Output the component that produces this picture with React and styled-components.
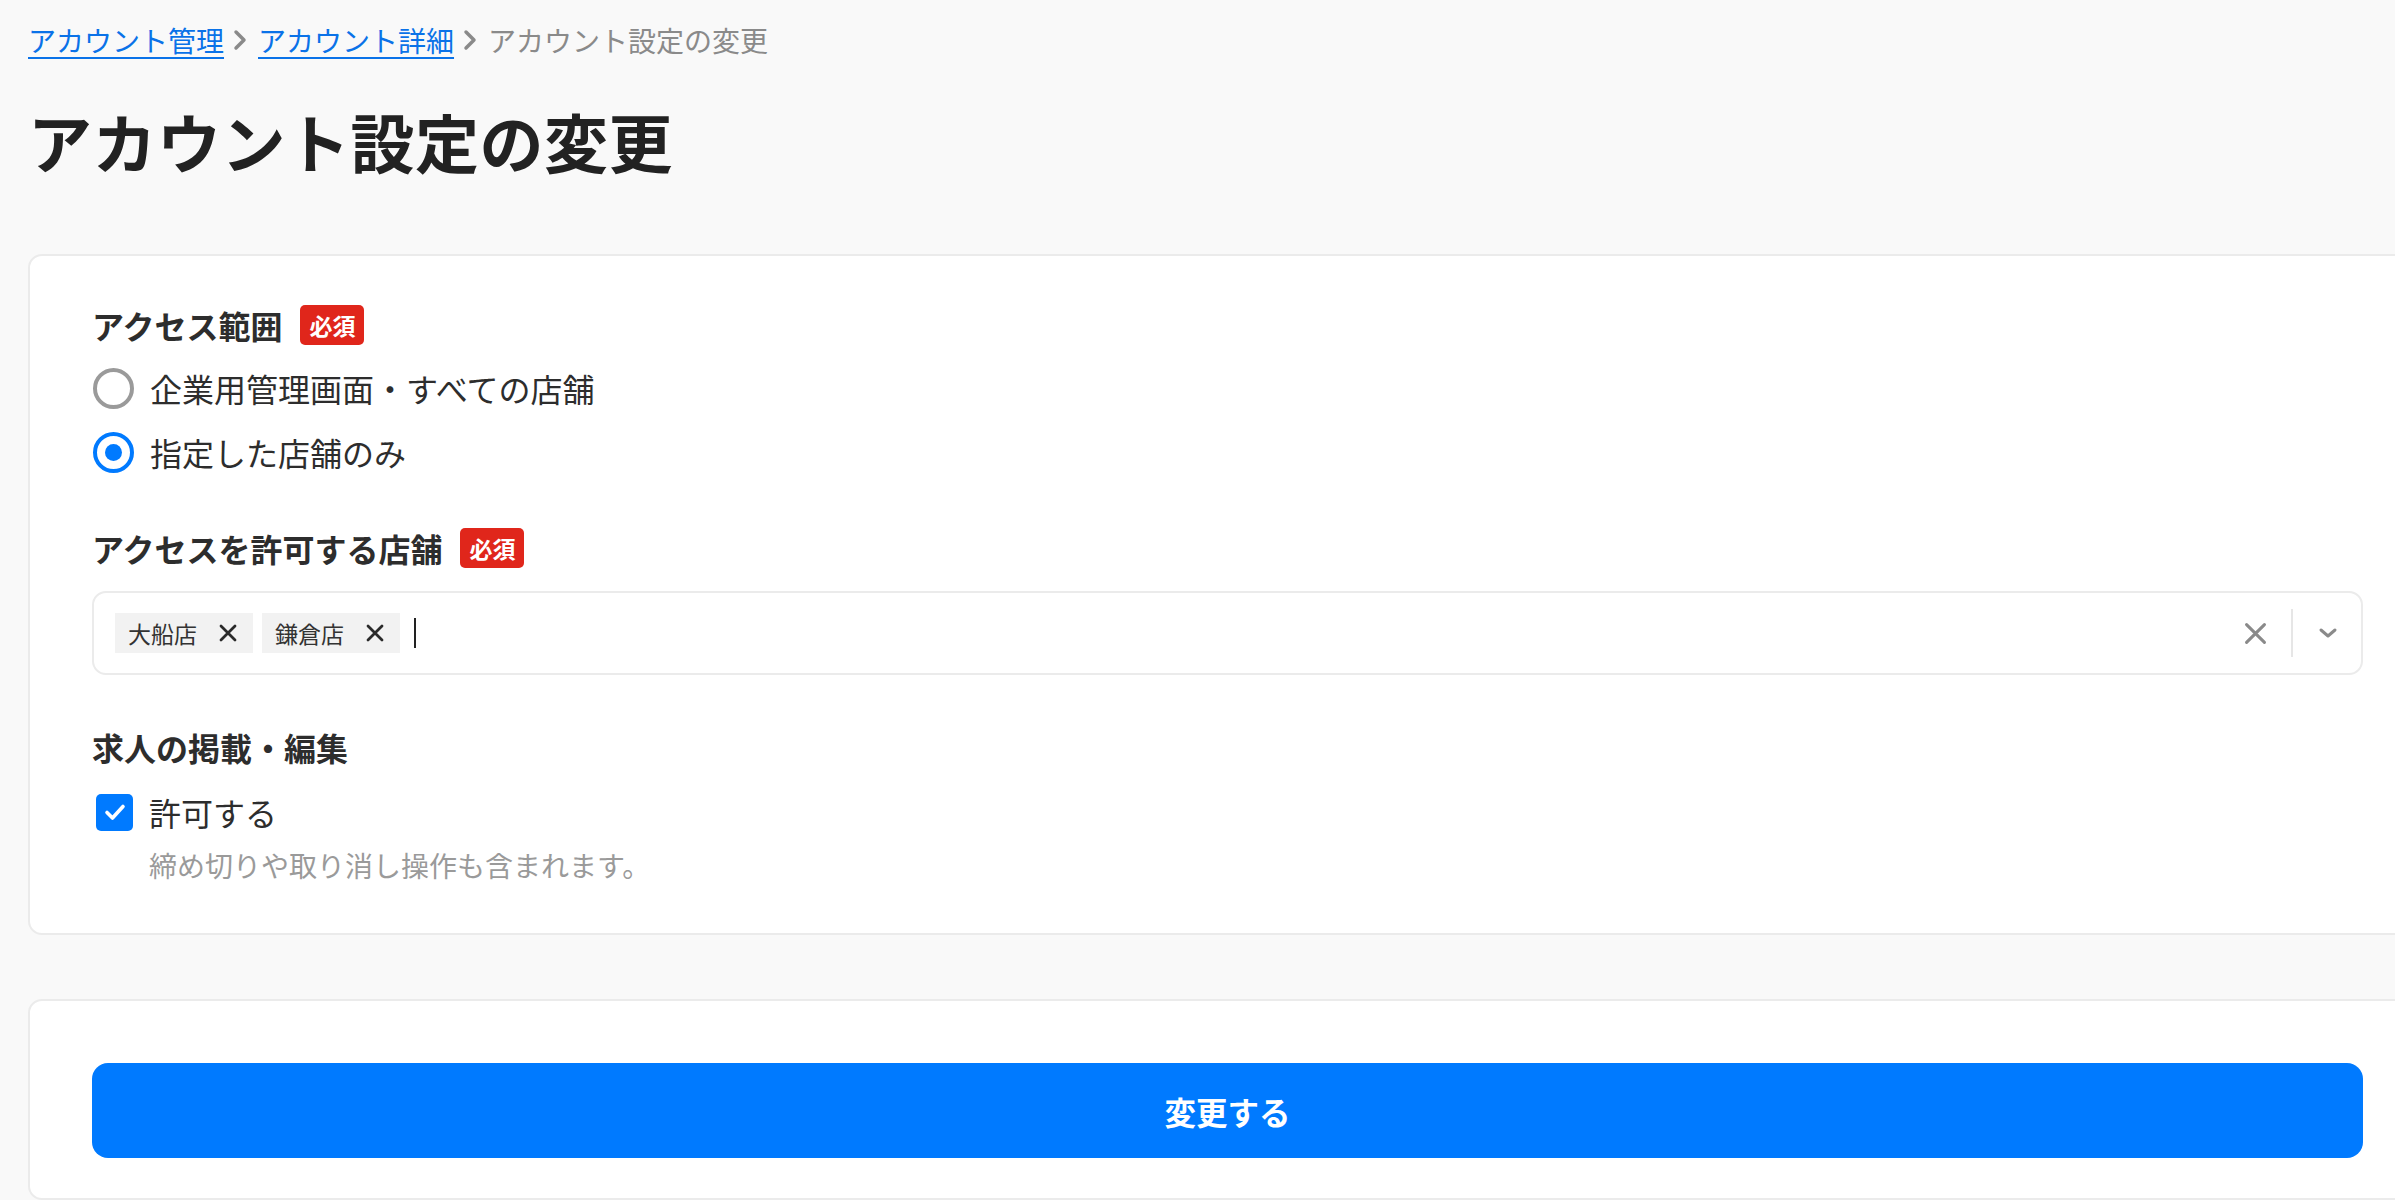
import React from 'react';
import styled, { createGlobalStyle, css } from 'styled-components';

const color = {
  page: '#f9f9f9',
  border: '#ebebeb',
  text: '#2d2d2d',
  title: '#222222',
  muted: '#8a8a8a',
  hint: '#9a9a9a',
  link: '#0a72e8',
  primary: '#007aff',
  danger: '#e0261b',
  chip: '#f2f2f2',
};

const GlobalStyle = createGlobalStyle`
  html, body {
    margin: 0;
    padding: 0;
    background: ${color.page};
    overflow: hidden;
  }
  body {
    font-family: "Noto Sans CJK JP", "Noto Sans", sans-serif;
    color: ${color.text};
  }
`;

const Page = styled.div`
  width: 2399px;
  padding: 20px 0 0 28px;
`;

const Breadcrumbs = styled.nav`
  display: flex;
  align-items: center;
  height: 40px;
  font-size: 28px;
  line-height: 40px;
`;

const Crumb = styled.a`
  color: ${color.link};
  text-decoration: underline;
  text-decoration-thickness: 2px;
  text-underline-offset: 5px;
`;

const Current = styled.span`
  color: ${color.muted};
`;

const Separator = styled.svg`
  width: 34px;
  height: 24px;
  flex: none;
`;

const Title = styled.h1`
  margin: 35px 0 0;
  font-size: 64px;
  line-height: 90px;
  font-weight: 700;
  color: ${color.title};
  letter-spacing: 0.5px;
`;

const Card = styled.section`
  background: #fff;
  border: 2px solid ${color.border};
  border-radius: 14px;
  padding: ${p => (p.compact ? '62px 62px 40px' : '45px 62px 48px')};
  margin-top: ${p => p.gap}px;
  display: flex;
  flex-direction: column;
  gap: 48px;
`;

const Field = styled.div`
  display: flex;
  flex-direction: column;
`;

const Label = styled.div`
  display: flex;
  align-items: center;
  gap: 18px;
  height: 48px;
  font-size: 32px;
  font-weight: 700;
  margin-bottom: ${p => p.space}px;
`;

const Required = styled.span`
  display: inline-flex;
  align-items: center;
  height: 40px;
  padding: 0 9px;
  border-radius: 5px;
  background: ${color.danger};
  color: #fff;
  font-size: 23px;
  font-weight: 700;
`;

const Options = styled.div`
  display: flex;
  flex-direction: column;
  gap: 16px;
`;

const Option = styled.label`
  display: flex;
  align-items: center;
  gap: 16px;
  height: 48px;
  font-size: 32px;
`;

const Radio = styled.span`
  width: 41px;
  height: 41px;
  margin-left: 1px;
  box-sizing: border-box;
  border-radius: 50%;
  border: 4px solid #9a9a9a;
  display: flex;
  align-items: center;
  justify-content: center;
  flex: none;

  ${p =>
    p.checked &&
    css`
      border-color: ${color.primary};
      &::after {
        content: '';
        width: 17px;
        height: 17px;
        border-radius: 50%;
        background: ${color.primary};
      }
    `}
`;

const Checkbox = styled.span`
  width: 37px;
  height: 37px;
  margin-left: 4px;
  border-radius: 5px;
  background: ${color.primary};
  display: flex;
  align-items: center;
  justify-content: center;
  flex: none;
`;

const Hint = styled.div`
  margin: 9px 0 0 57px;
  font-size: 28px;
  line-height: 40px;
  color: ${color.hint};
`;

const Select = styled.div`
  display: flex;
  align-items: center;
  height: 84px;
  box-sizing: border-box;
  border: 2px solid ${color.border};
  border-radius: 14px;
  padding: 0 13px 0 21px;
`;

const Values = styled.div`
  flex: 1;
  display: flex;
  align-items: center;
  gap: 9px;
`;

const Chip = styled.span`
  display: inline-flex;
  align-items: center;
  gap: 22px;
  height: 40px;
  padding: 0 16px 0 13px;
  background: ${color.chip};
  font-size: 23px;
  color: #333;
`;

const Caret = styled.span`
  width: 2px;
  height: 30px;
  margin-left: 5px;
  background: #222;
`;

const Indicators = styled.div`
  display: flex;
  align-items: center;
`;

const IconButton = styled.span`
  display: flex;
  align-items: center;
  justify-content: center;
  width: ${p => p.size}px;
  height: 48px;
`;

const Divider = styled.span`
  width: 2px;
  height: 48px;
  background: #e6e6e6;
  margin: 0 15px 0 24px;
`;

const SubmitButton = styled.button`
  width: 100%;
  height: 95px;
  border: 0;
  border-radius: 16px;
  background: ${color.primary};
  color: #fff;
  font-family: inherit;
  font-size: 31.5px;
  font-weight: 700;
  cursor: pointer;
`;

const Chevron = () => (
  <Separator viewBox="0 0 34 24">
    <path d="M12 4l8 8-8 8" fill="none" stroke="#8a8a8a" strokeWidth="3.5" strokeLinecap="round" strokeLinejoin="round" />
  </Separator>
);

const Cross = ({ size = 18, stroke = '#2a2a2a', width = 2.6 }) => (
  <svg width={size} height={size} viewBox="0 0 18 18">
    <path d="M2 2l14 14M16 2L2 16" stroke={stroke} strokeWidth={width} strokeLinecap="round" />
  </svg>
);

const stores = ['大船店', '鎌倉店'];

export default function App() {
  return (
    <Page>
      <GlobalStyle />

      <Breadcrumbs>
        <Crumb>アカウント管理</Crumb>
        <Chevron />
        <Crumb>アカウント詳細</Crumb>
        <Chevron />
        <Current>アカウント設定の変更</Current>
      </Breadcrumbs>

      <Title>アカウント設定の変更</Title>

      <Card gap={69}>
        <Field>
          <Label space={15}>
            アクセス範囲<Required>必須</Required>
          </Label>
          <Options>
            <Option>
              <Radio />
              企業用管理画面・すべての店舗
            </Option>
            <Option>
              <Radio checked />
              指定した店舗のみ
            </Option>
          </Options>
        </Field>

        <Field>
          <Label space={19}>
            アクセスを許可する店舗<Required>必須</Required>
          </Label>
          <Select>
            <Values>
              {stores.map(name => (
                <Chip key={name}>
                  {name}
                  <Cross size={18} width={2.8} />
                </Chip>
              ))}
              <Caret />
            </Values>
            <Indicators>
              <IconButton size={24}>
                <Cross size={23} stroke="#8a8a8a" width={2.4} />
              </IconButton>
              <Divider />
              <IconButton size={40}>
                <svg width="20" height="12" viewBox="0 0 20 12">
                  <path d="M3 3l7 6 7-6" fill="none" stroke="#8a8a8a" strokeWidth="3" strokeLinecap="round" strokeLinejoin="round" />
                </svg>
              </IconButton>
            </Indicators>
          </Select>
        </Field>

        <Field>
          <Label space={17}>求人の掲載・編集</Label>
          <Option>
            <Checkbox>
              <svg width="22" height="18" viewBox="0 0 22 18">
                <path d="M3 9.5l5.5 5.5L19 3.5" fill="none" stroke="#fff" strokeWidth="3.6" strokeLinecap="round" strokeLinejoin="round" />
              </svg>
            </Checkbox>
            許可する
          </Option>
          <Hint>締め切りや取り消し操作も含まれます。</Hint>
        </Field>
      </Card>

      <Card gap={64} compact>
        <SubmitButton>変更する</SubmitButton>
      </Card>
    </Page>
  );
}
